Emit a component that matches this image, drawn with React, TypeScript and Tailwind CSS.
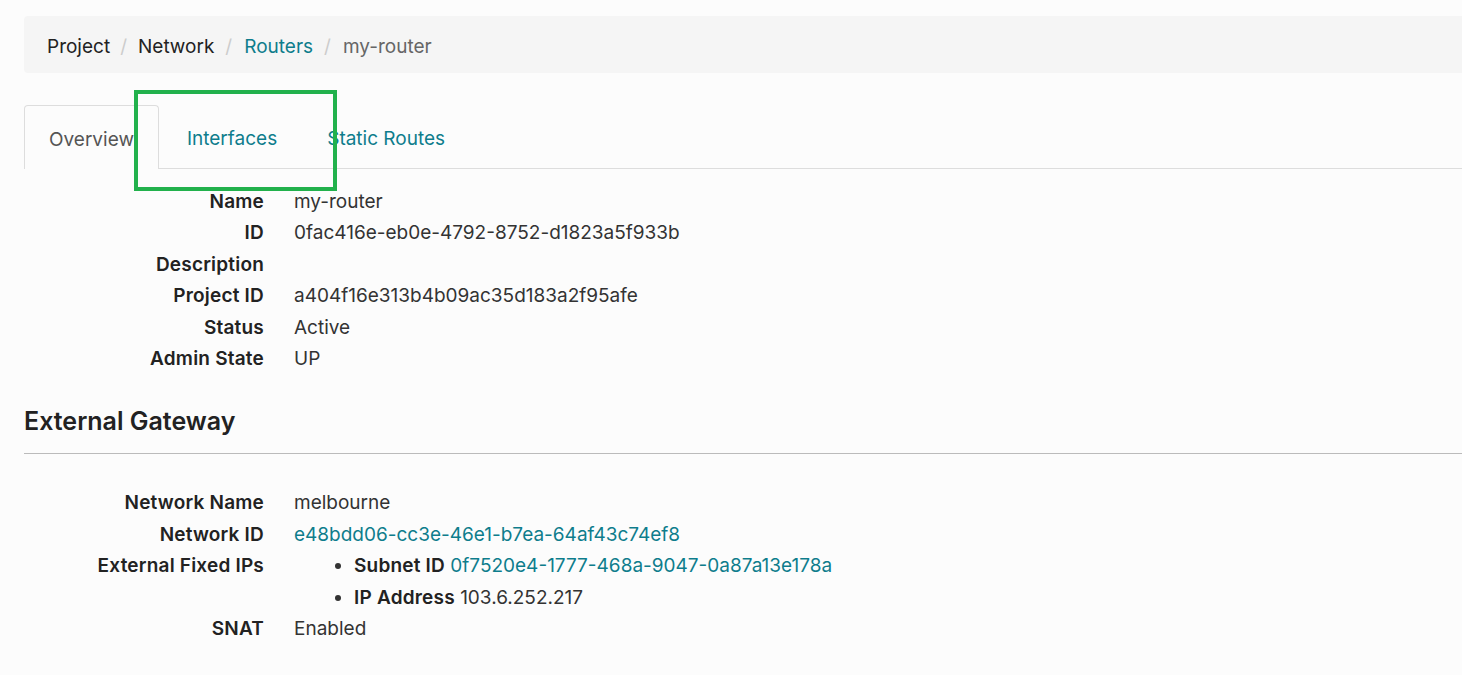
const font = { fontFamily: "Inter, 'Open Sans', sans-serif" };

const overview: [string, string][] = [
  ["Name", "my-router"],
  ["ID", "0fac416e-eb0e-4792-8752-d1823a5f933b"],
  ["Description", ""],
  ["Project ID", "a404f16e313b4b09ac35d183a2f95afe"],
  ["Status", "Active"],
  ["Admin State", "UP"],
];

function Row({ label, children }: { label: string; children?: React.ReactNode }) {
  return (
    <div className="flex leading-[31.4px]">
      <dt className="w-[240px] shrink-0 text-right font-semibold tracking-[0.2px] text-[#222]">{label}</dt>
      <dd className="ml-[30px] text-[#333]">{children}</dd>
    </div>
  );
}

export default function App() {
  return (
    <div
      className="relative min-h-[675px] overflow-hidden bg-[#fcfcfc] pl-6 pt-4 text-[19px] text-[#333]"
      style={font}
    >
      <div className="-mr-4 flex h-[57px] items-center rounded-l-[4px] bg-[#f5f5f5] pl-[23px] pt-[6px]">
        <span className="text-[#222]">Project</span>
        <span className="pl-[10px] pr-[11px] text-[#ccc]">/</span>
        <span className="text-[#222]">Network</span>
        <span className="pl-[11px] pr-[12px] text-[#ccc]">/</span>
        <span className="text-[#0e7d8c]">Routers</span>
        <span className="pl-[11px] pr-[12px] text-[#ccc]">/</span>
        <span className="text-[#666]">my-router</span>
      </div>

      <div className="mt-8 flex h-16 border-b border-[#ddd]">
        <div className="-mb-px flex items-center rounded-t-[4px] border border-b-0 border-[#ddd] bg-[#fcfcfc] px-6 pt-[6px] text-[#555]">
          Overview
        </div>
        <div className="flex items-center pl-7 pr-[26px] pt-[6px] text-[#0e7d8c]">Interfaces</div>
        <div className="flex items-center px-6 pt-[6px] text-[#0e7d8c]">Static Routes</div>
      </div>

      <dl className="mt-[17px]">
        {overview.map(([k, v]) => (
          <Row key={k} label={k}>
            {v}
          </Row>
        ))}
      </dl>

      <h3 className="mt-[30px] text-[25px] font-semibold leading-[34px] text-[#222]">External Gateway</h3>
      <hr className="mt-[15px] border-t border-[#bbb]" />

      <dl className="mt-[33px]">
        <Row label="Network Name">melbourne</Row>
        <Row label="Network ID">
          <span className="text-[#0e7d8c]">e48bdd06-cc3e-46e1-b7ea-64af43c74ef8</span>
        </Row>
        <Row label="External Fixed IPs">
          <ul className="list-disc pl-[60px]">
            <li>
              <span className="font-semibold tracking-[0.2px] text-[#222]">Subnet ID</span>{" "}
              <span className="text-[#0e7d8c]">0f7520e4-1777-468a-9047-0a87a13e178a</span>
            </li>
            <li>
              <span className="font-semibold tracking-[0.2px] text-[#222]">IP Address</span> 103.6.252.217
            </li>
          </ul>
        </Row>
        <Row label="SNAT">Enabled</Row>
      </dl>

      <div className="absolute left-[134px] top-[90px] h-[101px] w-[203px] border-4 border-[#22b14c]" />
    </div>
  );
}
